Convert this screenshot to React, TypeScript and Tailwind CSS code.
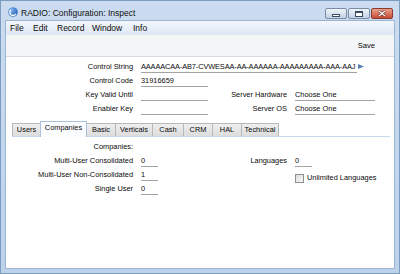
import React from 'react';

type FieldProps = {
  value?: string;
  width: string;
  tight?: boolean;
};

const Field: React.FC<FieldProps> = ({ value = '', width, tight }) => (
  <div className={`${width} h-[11px] leading-[10px] border-b border-[#a3a3a3] whitespace-nowrap overflow-hidden ${tight ? 'tracking-[-0.12px]' : ''}`}>
    {value}
  </div>
);

const tabs = [
  { name: 'Users', w: 'w-[28px]' },
  { name: 'Companies', w: 'w-[47px]' },
  { name: 'Basic', w: 'w-[28px]' },
  { name: 'Verticals', w: 'w-[37px]' },
  { name: 'Cash', w: 'w-[31px]' },
  { name: 'CRM', w: 'w-[29px]' },
  { name: 'HAL', w: 'w-[29px]' },
  { name: 'Technical', w: 'w-[38px]' },
];

const menus = [
  { name: 'File', w: 'w-[23px]' },
  { name: 'Edit', w: 'w-[24px]' },
  { name: 'Record', w: 'w-[35px]' },
  { name: 'Window', w: 'w-[41px]' },
  { name: 'Info', w: 'w-[30px]' },
];

const App: React.FC = () => {
  return (
    <div className="w-[400px] h-[274px] flex flex-col overflow-hidden border border-[#7d9cc2] bg-gradient-to-b from-[#cbdcf0] to-[#bcd2eb] font-['Liberation_Sans',Arial,sans-serif] text-[#0a0a0a]">
      {/* Title bar */}
      <div className="h-[19px] flex items-start shrink-0">
        <svg className="ml-[7px] mt-[6px]" width="10" height="10" viewBox="0 0 10 10">
          <defs>
            <radialGradient id="ico" cx="0.35" cy="0.3" r="0.8">
              <stop offset="0" stopColor="#7fb2ee" />
              <stop offset="1" stopColor="#1f5cb3" />
            </radialGradient>
          </defs>
          <circle cx="5" cy="5" r="4.8" fill="url(#ico)" />
          <path d="M2.6 3.2 A3.2 3.2 0 0 0 7.6 7.4" fill="none" stroke="#fff" strokeWidth="1.4" strokeLinecap="round" />
        </svg>
        <span className="ml-[3px] mt-[6px] leading-[12px] text-[8.5px] text-[#111]">RADIO: Configuration: Inspect</span>
        <div className="ml-auto mr-[6px] mt-[7px] flex gap-[1px]">
          <div className="w-[22px] h-[11px] rounded-[2px] border border-[#7a8ca6] bg-gradient-to-b from-[#eef3f9] to-[#c3d2e5] flex items-center justify-center">
            <div className="w-[8px] h-[3px] mt-[3px] bg-white border border-[#3c4b60]" />
          </div>
          <div className="w-[22px] h-[11px] rounded-[2px] border border-[#7a8ca6] bg-gradient-to-b from-[#eef3f9] to-[#c3d2e5] flex items-center justify-center">
            <div className="w-[8px] h-[6px] bg-white border border-[#3c4b60] border-t-2" />
          </div>
          <div className="w-[22px] h-[11px] rounded-[2px] border border-[#8a3a2c] bg-gradient-to-b from-[#e8a08c] to-[#c74a35] flex items-center justify-center">
            <svg width="8" height="7" viewBox="0 0 8 7">
              <path d="M1 1 L7 6 M7 1 L1 6" stroke="#5a2a22" strokeWidth="2.4" />
              <path d="M1 1 L7 6 M7 1 L1 6" stroke="#fff" strokeWidth="1.3" />
            </svg>
          </div>
        </div>
      </div>

      {/* Window body */}
      <div className="flex-1 mx-[4px] mb-[4px] border border-[#9db4d2] flex flex-col bg-white">
        {/* Menu bar */}
        <div className="h-[14px] shrink-0 flex items-center pl-[4px] text-[8.5px] leading-[14px] bg-gradient-to-b from-[#f3f7fc] to-[#dde7f4]">
          {menus.map((m) => (
            <span key={m.name} className={m.w}>{m.name}</span>
          ))}
        </div>

        {/* Toolbar */}
        <div className="h-[22px] shrink-0 flex items-center justify-end pr-[19px] bg-[#f4f5f7] border-b border-[#d6dce4] text-[7.6px]">
          Save
        </div>

        {/* Content */}
        <div className="flex-1 flex flex-col pt-[3px] text-[7.4px]">
          <div className="h-[14px] flex items-center">
            <div className="w-[127px] text-right">Control String</div>
            <div className="ml-[8px] flex items-center">
              <Field width="w-[216px]" tight value="AAAAACAA-AB7-CVWESAA-AA-AAAAAA-AAAAAAAAA-AAA-AAJ" />
              <svg className="ml-[1px] -mt-[2px]" width="6" height="5" viewBox="0 0 6 5">
                <path d="M0 0 L6 2.5 L0 5 Z" fill="#5d80b3" />
              </svg>
            </div>
          </div>
          <div className="h-[14px] flex items-center">
            <div className="w-[127px] text-right">Control Code</div>
            <div className="ml-[8px]"><Field width="w-[67px]" value="31916659" /></div>
          </div>
          <div className="h-[14px] flex items-center">
            <div className="w-[127px] text-right">Key Valid Until</div>
            <div className="ml-[8px]"><Field width="w-[67px]" /></div>
            <div className="w-[79px] text-right">Server Hardware</div>
            <div className="ml-[8px]"><Field width="w-[80px]" value="Choose One" /></div>
          </div>
          <div className="h-[14px] flex items-center">
            <div className="w-[127px] text-right">Enabler Key</div>
            <div className="ml-[8px]"><Field width="w-[67px]" /></div>
            <div className="w-[79px] text-right">Server OS</div>
            <div className="ml-[8px]"><Field width="w-[80px]" value="Choose One" /></div>
          </div>

          {/* Tabs */}
          <div className="mt-[5px] ml-[6px] mr-[4px] h-[16px] flex items-end border-b border-[#c6d8ee]">
            {tabs.map((t, i) => {
              const selected = t.name === 'Companies';
              return selected ? (
                <div
                  key={t.name}
                  className={`${t.w} h-[16px] -mb-px relative flex items-center justify-center pb-[3px] bg-[#fafcfe] border border-b-0 border-[#a9c1de]`}
                >
                  {t.name}
                </div>
              ) : (
                <div
                  key={t.name}
                  className={`${t.w} h-[13px] flex items-center justify-center bg-gradient-to-b from-[#efefef] to-[#dcdcdc] border-t border-[#b8b8b8] ${i === 0 ? 'border-l' : ''} ${i === tabs.length - 1 ? 'border-r' : ''} ${i > 0 && tabs[i - 1].name !== 'Companies' ? 'border-l' : ''}`}
                >
                  {t.name}
                </div>
              );
            })}
          </div>

          {/* Companies panel */}
          <div className="pt-[3px] flex flex-col">
            <div className="h-[14px] flex items-center">
              <div className="w-[127px] text-right">Companies:</div>
            </div>
            <div className="h-[14px] flex items-center">
              <div className="w-[127px] text-right">Multi-User Consolidated</div>
              <div className="ml-[8px]"><Field width="w-[17px]" value="0" /></div>
              <div className="w-[129px] text-right">Languages</div>
              <div className="ml-[8px]"><Field width="w-[17px]" value="0" /></div>
            </div>
            <div className="h-[14px] flex items-center">
              <div className="w-[127px] text-right">Multi-User Non-Consolidated</div>
              <div className="ml-[8px]"><Field width="w-[17px]" value="1" /></div>
              <div className="ml-[137px] self-start mt-[5px] h-[10px] flex items-center">
                <div className="w-[9px] h-[9px] border border-[#8e8f8f] bg-gradient-to-br from-[#dcdcdc] to-[#f8f8f8]" />
                <span className="ml-[3px]">Unlimited Languages</span>
              </div>
            </div>
            <div className="h-[14px] flex items-center">
              <div className="w-[127px] text-right">Single User</div>
              <div className="ml-[8px]"><Field width="w-[17px]" value="0" /></div>
            </div>
          </div>
        </div>
      </div>
    </div>
  );
};

export default App;
